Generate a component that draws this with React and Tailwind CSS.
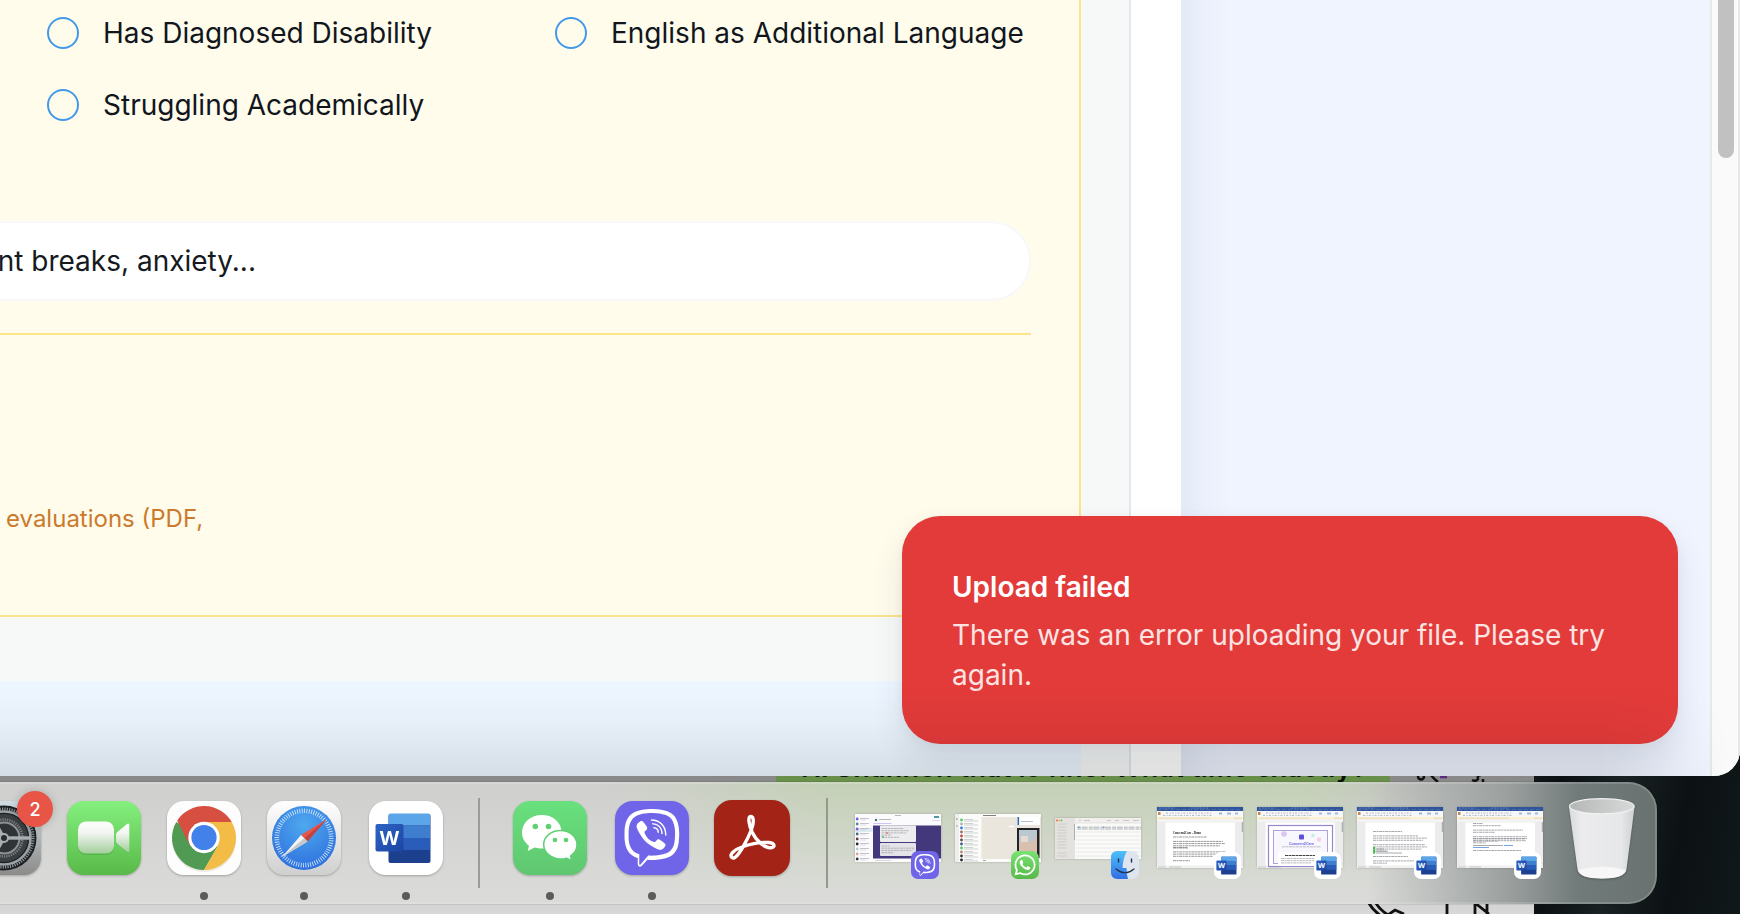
import React from "react";
import { FaViber, FaWhatsapp } from "react-icons/fa";

function Option({ label, className = "" }) {
  return (
    <label className={`flex h-8 items-center gap-6 ${className}`}>
      <span className="size-8 shrink-0 rounded-full border-2 border-[#4299ea]" />
      <span className="whitespace-nowrap text-[28px] leading-8 text-[#11161d]">{label}</span>
    </label>
  );
}

function WordMark({ id }) {
  return (
    <svg viewBox="0 0 74 74" className="size-full">
      <defs>
        <linearGradient id={id} x1="0" y1="0" x2="1" y2="1">
          <stop offset="0" stopColor="#2d63c4" />
          <stop offset="1" stopColor="#1b46a3" />
        </linearGradient>
      </defs>
      <rect x="19.5" y="13" width="42" height="49" rx="2" fill="#1c3f8e" />
      <path d="M19.500 24.500V14.500q0-2 2-2H59q2 0 2 2v10z" fill="#5ba5e8" />
      <path d="M19.500 24.500H61V37H19.500z" fill="#3f7dcf" />
      <path d="M19.500 37H61v12H19.500z" fill="#2a5cb9" />
      <rect x="6.500" y="23" width="28" height="27.500" rx="2" fill={`url(#${id})`} />
      <text x="20.300" y="44" textAnchor="middle" fontFamily="Open Sans, sans-serif" fontWeight="700" fontSize="20" fill="#fff">W</text>
    </svg>
  );
}

function SettingsIcon() {
  return (
    <svg viewBox="0 0 74 74" className="size-full">
      <defs>
        <linearGradient id="setBg" x1="0" y1="0" x2="0" y2="1">
          <stop offset="0" stopColor="#cfdde4" />
          <stop offset="1" stopColor="#8c8b89" />
        </linearGradient>
      </defs>
      <rect width="74" height="74" rx="17" fill="url(#setBg)" />
      <circle cx="37" cy="37" r="32.500" fill="#1c2022" />
      <circle cx="37" cy="37" r="29" fill="none" stroke="#8f979b" strokeWidth="3" strokeDasharray="1.2 1.2" />
      <circle cx="37" cy="37" r="26.500" fill="none" stroke="#9aa2a6" strokeWidth="2.500" />
      <circle cx="37" cy="37" r="24" fill="#3b3f41" />
      <circle cx="37" cy="37" r="18.500" fill="none" stroke="#777d80" strokeWidth="2.500" strokeDasharray="1.300 1" />
      <circle cx="37" cy="37" r="15.500" fill="none" stroke="#8b9194" strokeWidth="2" />
      <circle cx="37" cy="37" r="14" fill="#303335" />
      <g stroke="#a9b0b3" strokeWidth="3.400">
        <path d="M37 37H63" />
        <path d="M37 37L24 14.500" />
        <path d="M37 37L24 59.500" />
      </g>
      <circle cx="37" cy="37" r="4" fill="#2a2d2f" stroke="#a9b0b3" strokeWidth="2" />
    </svg>
  );
}

function FacetimeIcon() {
  return (
    <svg viewBox="0 0 74 74" className="size-full">
      <defs>
        <linearGradient id="ftBg" x1="0" y1="0" x2="0" y2="1">
          <stop offset="0" stopColor="#85f07f" />
          <stop offset="1" stopColor="#58b948" />
        </linearGradient>
        <linearGradient id="ftCam" x1="0" y1="0" x2="0" y2="1">
          <stop offset="0" stopColor="#ffffff" />
          <stop offset=".35" stopColor="#f2f5f1" />
          <stop offset="1" stopColor="#a3cf9c" />
        </linearGradient>
      </defs>
      <rect width="74" height="74" rx="17" fill="url(#ftBg)" />
      <rect x="11" y="22" width="36" height="32" rx="8" fill="#3f9a35" opacity=".4" />
      <rect x="11" y="20.500" width="36" height="32" rx="8" fill="url(#ftCam)" />
      <path d="M49 34q0-2 1.700-3.300L60 23q2.300-1.500 2.300 1v25.500q0 2.500-2.300 1L50.700 43Q49 41.700 49 40z" fill="url(#ftCam)" />
    </svg>
  );
}

function ChromeIcon() {
  return (
    <svg viewBox="0 0 74 74" className="size-full">
      <rect width="74" height="74" rx="17" fill="#fdfdfd" />
      <circle cx="37" cy="39" r="32" fill="#b9b09a" opacity=".25" />
      <path d="M37 37L9.290 21A32 32 0 0 0 37 69L50.860 45z" fill="#519a53" />
      <path d="M37 37L50.860 45L37 69A32 32 0 0 0 64.700 21H37z" fill="#f2bc47" />
      <path d="M37 37V21H64.700A32 32 0 0 0 10.200 19.500L23.140 45z" fill="#d64f41" />
      <circle cx="37" cy="36.500" r="15.700" fill="#fff" />
      <circle cx="37" cy="36.500" r="12.600" fill="#4280ea" />
    </svg>
  );
}

function SafariIcon() {
  return (
    <svg viewBox="0 0 74 74" className="size-full">
      <defs>
        <linearGradient id="sfBg" x1="0" y1="0" x2="0" y2="1">
          <stop offset="0" stopColor="#ffffff" />
          <stop offset="1" stopColor="#cfcfcf" />
        </linearGradient>
        <radialGradient id="sfDial" cx=".5" cy=".3" r=".7">
          <stop offset="0" stopColor="#4fa9ee" />
          <stop offset="1" stopColor="#2e70de" />
        </radialGradient>
      </defs>
      <rect width="74" height="74" rx="17" fill="url(#sfBg)" />
      <circle cx="37" cy="37" r="32" fill="url(#sfDial)" />
      <circle cx="37" cy="37" r="27.200" fill="none" stroke="#d9ecfb" strokeWidth="4.600" strokeDasharray=".8 1.573" />
      <path d="M59.500 18.500L34 34L40.500 40.500z" fill="#e8564a" />
      <path d="M59.500 18.500L37.200 37.200L40.500 40.500z" fill="#c2433d" />
      <path d="M15 56L34 34L40.500 40.500z" fill="#f4f4f4" />
      <path d="M15 56L37.200 37.200L40.500 40.500z" fill="#c6c9cc" />
    </svg>
  );
}

function WechatIcon() {
  return (
    <svg viewBox="0 0 74 74" className="size-full">
      <defs>
        <linearGradient id="wcBg" x1="0" y1="0" x2="0" y2="1">
          <stop offset="0" stopColor="#69e07d" />
          <stop offset="1" stopColor="#5fc770" />
        </linearGradient>
      </defs>
      <rect width="74" height="74" rx="17" fill="url(#wcBg)" />
      <path d="M29 14C17.500 14 9 21.800 9 31.500c0 5.500 2.700 10 7 13.200L14.700 50l7-3.500c2.300.7 4.700 1 7.300 1C40 47.500 48.500 40.500 48.500 31S40 14 29 14z" fill="#fff" />
      <circle cx="22.300" cy="25.500" r="2.800" fill="#62cf75" />
      <circle cx="35.500" cy="25.500" r="2.800" fill="#62cf75" />
      <path d="M47.500 29.500C38 29.500 30.700 35.700 30.700 43.500S38 58 47.500 58c2 0 4-.3 5.800-.9l5.500 2.600-1.300-4.700C61.500 52.300 64 48.200 64 43.500c0-7.800-7-14-16.500-14z" fill="#fff" stroke="#62cf75" strokeWidth="1.500" />
      <circle cx="42" cy="39" r="2.300" fill="#62cf75" />
      <circle cx="53" cy="39" r="2.300" fill="#62cf75" />
    </svg>
  );
}

function AcrobatIcon() {
  return (
    <svg viewBox="0 0 76 76" className="size-full">
      <rect width="76" height="76" rx="18" fill="#a32417" />
      <path
        d="M18 57.500C14.500 55 20.500 49.500 28 47C36 44 47 41.800 55 42.500C61 43 61.500 47.500 57 47.700C50 48 42 40.500 38 32C35 25 33.500 17 36.700 16.500C40 16.200 40 23 37.500 29.500C34 38.500 26 53.500 21.500 57C20 58.300 18.800 58.200 18 57.500z"
        fill="none" stroke="#fff" strokeWidth="3.400" strokeLinejoin="round"
      />
    </svg>
  );
}

function FinderIcon() {
  return (
    <svg viewBox="0 0 28 28" className="size-full">
      <defs>
        <linearGradient id="fdL" x1="0" y1="0" x2="0" y2="1">
          <stop offset="0" stopColor="#4fc0f8" />
          <stop offset="1" stopColor="#2f6fe6" />
        </linearGradient>
      </defs>
      <rect width="28" height="28" rx="6.500" fill="#dfe5ee" />
      <path d="M16 0H6.500Q0 0 0 6.500v15Q0 28 6.500 28H17q-1.500-5-1.500-11H11.500Q12 7 16 0z" fill="url(#fdL)" />
      <path d="M7.500 8v3M20.500 8v3" stroke="#20304a" strokeWidth="1.400" strokeLinecap="round" />
      <path d="M5 18q9 7.500 18 0" fill="none" stroke="#20304a" strokeWidth="1.200" strokeLinecap="round" />
    </svg>
  );
}

function TrashBin() {
  return (
    <svg viewBox="0 0 68 84" className="h-[84px] w-[68px]">
      <defs>
        <linearGradient id="binBody" x1="0" y1="0" x2="1" y2="0">
          <stop offset="0" stopColor="#d9dadb" />
          <stop offset=".2" stopColor="#ececee" />
          <stop offset=".8" stopColor="#e6e7e9" />
          <stop offset="1" stopColor="#cfd0d2" />
        </linearGradient>
        <linearGradient id="binIn" x1="0" y1="0" x2="1" y2="0">
          <stop offset="0" stopColor="#b5b6b6" />
          <stop offset="1" stopColor="#d8d9d9" />
        </linearGradient>
      </defs>
      <path d="M1 10L9.500 72Q11 81.500 34 81.500T58.500 72L66.500 10z" fill="url(#binBody)" />
      <path d="M9.800 73Q34 66 58.200 73Q56 81.500 34 81.500T9.800 73z" fill="#fafafa" opacity=".8" />
      <ellipse cx="33.800" cy="9.300" rx="32.400" ry="7.600" fill="url(#binIn)" stroke="#f1f1f1" strokeWidth="1.200" />
    </svg>
  );
}

function Lines({ x, y, rows, color = "#a4a6ab" }) {
  return rows.map((w, i) =>
    w ? <path key={i} d={`M${x} ${y + i * 2.2}h${w}`} stroke={color} strokeWidth=".8" strokeDasharray="3 .5 2 .6" /> : null
  );
}

function ViberThumb() {
  const dots = ["#6a5fe8", "#4a8a9a", "#7c5be0", "#3f6f7e", "#5a3a3a", "#22262c", "#b9c9d6", "#e0a58a", "#33363c"];
  return (
    <svg viewBox="0 0 86 48" className="h-12 w-[86px]">
      <rect width="86" height="48" fill="#fbfbfd" />
      <rect y="14" width="17.500" height="4" fill="#dceaf2" />
      {dots.map((c, i) => (
        <g key={i}>
          <circle cx="2.200" cy={5 + i * 5} r="1.400" fill={c} />
          <path d={`M5 ${4.500 + i * 5}h9`} stroke="#a9abb4" strokeWidth=".7" />
          <path d={`M5 ${6 + i * 5}h6`} stroke="#ccced6" strokeWidth=".6" />
        </g>
      ))}
      <path d="M40 1.500h6M24 5.500h12" stroke="#a5a6ae" strokeWidth=".8" />
      <circle cx="21" cy="6" r="1.200" fill="#3f6f7e" />
      <path d="M18.500 9.500h18" stroke="#b9aef0" strokeWidth=".7" />
      <rect x="79" y="2" width="5" height="2" fill="#4f9aa2" />
      <path d="M77 6.500h8" stroke="#d3ccf6" strokeWidth=".8" />
      <rect x="18" y="11.500" width="68" height="33" fill="#43387c" />
      <rect x="25" y="11.500" width="36" height="16.500" rx="1" fill="#ededf0" />
      <rect x="25" y="29" width="36" height="13" rx="1" fill="#e4e4e8" />
      <Lines x={26.500} y={14.500} rows={[22, 27, 25, 10, 18]} />
      <Lines x={26.500} y={32} rows={[8, 33, 31, 12]} />
      <circle cx="28" cy="23" r="1" fill="#58c46a" />
      <circle cx="32" cy="19" r=".9" fill="#e46a6a" />
      <path d="M20 46.500h16" stroke="#c9cad2" strokeWidth=".7" />
    </svg>
  );
}

function WhatsappThumb() {
  const dots = ["#56c96a", "#b0b3b8", "#3478e0", "#9a6a5c", "#c0483f", "#5b4a42", "#3a5a8a", "#56c96a", "#b08a6e", "#40312c", "#26262a"];
  return (
    <svg viewBox="0 0 86 48" className="h-12 w-[86px]">
      <rect width="86" height="48" fill="#fbfbfa" />
      <rect width="4" height="48" fill="#eeeeec" />
      {dots.map((c, i) => (
        <g key={i}>
          <circle cx="6.500" cy={6 + i * 4} r="1.400" fill={c} />
          <path d={`M9 ${5.500 + i * 4}h9M9 ${7 + i * 4}h14`} stroke="#b4b6b9" strokeWidth=".6" />
        </g>
      ))}
      <circle cx="1.800" cy="5" r=".8" fill="#7f8286" />
      <circle cx="1.800" cy="12" r=".8" fill="#9a9da0" />
      <rect x="26.500" y="3" width="59.500" height="42" fill="#ebe6dd" />
      <path d="M28 1.500h13" stroke="#6f7276" strokeWidth=".9" />
      <path d="M54 12.500h5" stroke="#fff" strokeWidth="1.500" />
      <rect x="62" y="3" width="23" height="8" fill="#fff" />
      <rect x="62.500" y="3" width="1.600" height="8" fill="#2f6aa8" />
      <path d="M66 7.500h12" stroke="#9fb4c8" strokeWidth=".8" />
      <rect x="62" y="14" width="22.500" height="30" fill="#222124" />
      <rect x="64" y="16" width="18" height="28" fill="#b9c9cf" />
      <path d="M64 30q5-8 9-3t9-7v18H64z" fill="#d9bfae" />
      <path d="M66 22h7v6h-7z" fill="#e7d9cf" />
      <path d="M28 46.500h3" stroke="#8f9295" strokeWidth=".8" />
    </svg>
  );
}

function FinderThumb() {
  return (
    <svg viewBox="0 0 86 41" className="h-[41px] w-[86px]">
      <rect width="86" height="41" fill="#fafaf9" />
      <rect width="20" height="41" fill="#e4e2de" />
      <rect x="20" width="66" height="5" fill="#f0efed" />
      <circle cx="2" cy="2.500" r=".9" fill="#ea5b50" />
      <circle cx="4.300" cy="2.500" r=".9" fill="#f0b23d" />
      <circle cx="6.500" cy="2.500" r=".9" fill="#56bf4b" />
      <path d="M24 2.500h2M29 2.500h6M52 2.500h4M60 2.500h4M68 2.500h6M78 2.500h6" stroke="#bdbdbb" strokeWidth=".8" />
      <path d="M20 5h66" stroke="#d6d6d4" strokeWidth=".6" />
      <path d="M22 9.200h64M22 11h64" stroke="#9a9da3" strokeWidth=".8" strokeDasharray="4 .7 6 1" />
      <path d="M23 9.200h1.500M48 9.200h1.500" stroke="#3e8ae6" strokeWidth="1" />
      {[14, 18, 22, 26, 30, 34, 38].map((y) => (
        <path key={y} d={`M20.500 ${y}h65`} stroke="#f1f1ef" strokeWidth="1.800" />
      ))}
      {[6, 9, 12, 15, 18, 21, 24, 27, 30, 35, 38].map((y) => (
        <path key={y} d={`M2.500 ${y}h9`} stroke="#c8c7c5" strokeWidth=".8" />
      ))}
      <path d="M19.500 6v16" stroke="#a8a7a5" strokeWidth=".9" />
    </svg>
  );
}

function DocThumb({ kind }) {
  return (
    <svg viewBox="0 0 86 61" className="h-[61px] w-[86px]">
      <rect width="86" height="61" fill="#ececed" />
      <rect width="86" height="4" fill="#2f549b" />
      <path d="M1 2.600h82" stroke="#5f80bf" strokeWidth=".6" strokeDasharray="4 2" />
      <path d="M2 1h16M34 1h18" stroke="#8ba3d2" strokeWidth=".6" strokeDasharray="2 1" />
      <rect y="4" width="86" height="6" fill="#f7f7f8" />
      <path d="M9 6h46M6 8.400h50" stroke="#a3adc0" strokeWidth=".9" strokeDasharray="2 1.600 1 1.200" />
      <rect x="1" y="5" width="2.500" height="3" fill="#c98a5a" />
      <path d="M62 6.500h3M70 6.500h4M78 6.500h3" stroke="#9fbbe6" strokeWidth="1.800" />
      <rect y="10" width="86" height="2.500" fill="#fcf1d3" />
      <path d="M2 11.200h50M77 11.200h8" stroke="#d8cba6" strokeWidth=".6" />
      <rect y="12.500" width="86" height="2.500" fill="#f3f3f3" />
      <rect x="8.500" y="15.500" width="69.500" height="43" fill="#fff" />
      <path d="M85.300 15v10" stroke="#9fa0a3" strokeWidth="1" />
      <rect y="59" width="86" height="2" fill="#f1f1f1" />
      <path d="M1 60h8M12 60h12" stroke="#a7a8ab" strokeWidth=".6" />
      {kind === "demo" && (
        <>
          <text x="16" y="26.500" textLength="28" lengthAdjust="spacingAndGlyphs" fontFamily="Liberation Serif, serif" fontWeight="700" fontSize="4" fill="#111">Concern2Care - Demo</text>
          <Lines x={16} y={30} rows={[34, 0, 50, 52, 47, 15]} color="#7d7e82" />
          <Lines x={16} y={40.500} rows={[14, 0, 53, 50, 40, 0, 17, 0]} color="#7d7e82" />
        </>
      )}
      {kind === "cert" && (
        <>
          <rect x="11.500" y="18.500" width="64" height="41" fill="#fff" stroke="#9a86c9" strokeWidth="1.200" />
          <rect x="16.500" y="23.500" width="54" height="33" fill="#f7f7fd" stroke="#a896d6" strokeWidth=".9" />
          <circle cx="27" cy="27" r="2.800" fill="#d9c8f3" />
          <circle cx="56" cy="28.500" r="1.800" fill="#c5eedf" />
          <circle cx="62" cy="32.500" r="2.200" fill="#f6d0e8" />
          <rect x="42" y="27.500" width="5" height="5" rx="1" fill="#5b50dd" />
          <text x="44.500" y="37.500" textAnchor="middle" fontFamily="Liberation Sans, sans-serif" fontWeight="700" fontSize="3.700" fill="#6a63e4">Concern2Care</text>
          <path d="M25 39.800h39" stroke="#a5a7b5" strokeWidth=".7" strokeDasharray="3 .5" />
          <rect x="21" y="45" width="47" height="14" fill="#fff" />
          <path d="M28 48.500h30" stroke="#444" strokeWidth="1" strokeDasharray="3 .5" />
          <Lines x={24} y={51.500} rows={[38, 33, 30]} />
        </>
      )}
      {kind === "notes" && (
        <>
          <Lines x={16} y={24.500} rows={[29, 0, 45, 54, 50, 0, 52, 54, 49, 15]} color="#909297" />
          <path d="M16 41h2M16 43.300h2M16 45.600h2" stroke="#46c24c" strokeWidth="2.200" />
          <path d="M19 42h8M19 44h10M19 46h26" stroke="#909297" strokeWidth=".8" />
          <Lines x={16} y={49.500} rows={[35, 0, 48, 14]} color="#909297" />
        </>
      )}
      {kind === "letter" && (
        <>
          <Lines x={16} y={16.500} rows={[10, 28, 0, 50, 22, 0, 54, 52, 25]} color="#909297" />
          <Lines x={16} y={31.500} rows={[54, 53, 13]} color="#909297" />
          <path d="M16 38.500h30" stroke="#909297" strokeWidth=".8" />
          <path d="M47 38.500h9M16 40.500h16" stroke="#4d8fd6" strokeWidth=".8" />
          <Lines x={16} y={43.500} rows={[48]} color="#909297" />
        </>
      )}
    </svg>
  );
}

function DockApp({ children, running, className = "" }) {
  return (
    <div className={`flex shrink-0 flex-col items-center ${className}`}>
      <div className="size-[74px] drop-shadow-[0_1px_1px_rgba(0,0,0,0.25)]">{children}</div>
      {running && <span className="mt-[17px] size-2 rounded-full bg-[#5b5b5a]" />}
    </div>
  );
}

function DockWindow({ children, badge, className = "" }) {
  return (
    <div className={`relative shrink-0 ${className}`}>
      <div className="drop-shadow-[0_0_1px_rgba(0,0,0,0.2)]">{children}</div>
      {badge}
    </div>
  );
}

function ViberBadge({ className }) {
  return (
    <span className={`flex items-center justify-center bg-[#7065e9] text-white ${className}`}>
      <FaViber className="size-[78%]" />
    </span>
  );
}

function WordBadge({ id }) {
  return (
    <span className="absolute left-[57px] top-[45px] size-[27px] rounded-[7px] bg-white">
      <WordMark id={id} />
    </span>
  );
}

function Dock() {
  return (
    <div className="relative mt-[6px] flex h-[122px] w-[1689px] -ml-8 rounded-r-[28px] border-2 border-[#ffffff28] bg-[linear-gradient(to_right,transparent_1400px,#9ba09f_1540px,#717b7a_1610px,#69726f_1689px),linear-gradient(to_bottom,transparent,#dadbd8_90%),linear-gradient(to_right,#cfcfcd_640px,#c4d0b6_860px,#c4d0b6_1340px,#c4c6c2_1440px)] bg-origin-border pt-[17px] shadow-[0_0_1px_rgba(0,0,0,0.7)]">
      <div className="relative -ml-[3px] shrink-0">
        <DockApp><SettingsIcon /></DockApp>
        <span className="absolute left-[50px] -top-[10px] flex size-9 items-center justify-center rounded-full bg-[#e85445] text-[18px] font-medium text-white shadow-[0_0_8px_rgba(0,0,0,0.2)]">2</span>
      </div>
      <DockApp className="ml-[26px]"><FacetimeIcon /></DockApp>
      <DockApp running className="ml-[26px]"><ChromeIcon /></DockApp>
      <DockApp running className="ml-[26px]"><SafariIcon /></DockApp>
      <DockApp running className="ml-[28px]">
        <div className="size-full rounded-[17px] bg-white"><WordMark id="wordDock" /></div>
      </DockApp>
      <span className="-mt-[3px] ml-[35px] h-[90px] w-[2px] shrink-0 bg-[#9b9c9a]" />
      <DockApp running className="ml-[33px]"><WechatIcon /></DockApp>
      <DockApp running className="ml-[28px]">
        <ViberBadge className="size-full rounded-[18px]" />
      </DockApp>
      <DockApp className="ml-[25px]">
        <div className="-mt-px size-[76px]"><AcrobatIcon /></div>
      </DockApp>
      <span className="-mt-[3px] ml-[38px] h-[90px] w-[2px] shrink-0 bg-[#929a89]" />
      <DockWindow className="ml-[27px] mt-[13px]" badge={<ViberBadge className="absolute left-[56px] top-[37px] size-7 rounded-[7px]" />}>
        <ViberThumb />
      </DockWindow>
      <DockWindow
        className="ml-[14px] mt-[13px]"
        badge={
          <span className="absolute left-[56px] top-[37px] flex size-7 items-center justify-center rounded-[7px] bg-linear-to-b from-[#7be274] to-[#56b948] text-white">
            <FaWhatsapp className="size-6" />
          </span>
        }
      >
        <WhatsappThumb />
      </DockWindow>
      <DockWindow className="ml-[14px] mt-[17px]" badge={<span className="absolute left-[56px] top-[33px] size-7"><FinderIcon /></span>}>
        <FinderThumb />
      </DockWindow>
      <DockWindow className="ml-[16px] mt-[6px]" badge={<WordBadge id="w1" />}><DocThumb kind="demo" /></DockWindow>
      <DockWindow className="ml-[14px] mt-[6px]" badge={<WordBadge id="w2" />}><DocThumb kind="cert" /></DockWindow>
      <DockWindow className="ml-[14px] mt-[6px]" badge={<WordBadge id="w3" />}><DocThumb kind="notes" /></DockWindow>
      <DockWindow className="ml-[14px] mt-[6px]" badge={<WordBadge id="w4" />}><DocThumb kind="letter" /></DockWindow>
      <div className="-mt-[4px] ml-[25px] shrink-0 drop-shadow-[0_1px_1px_rgba(0,0,0,0.25)]"><TrashBin /></div>
    </div>
  );
}

function Desktop() {
  return (
    <div className="absolute inset-0 flex bg-[#0d1314]">
      <div className="relative flex w-[1534px] flex-col justify-between pt-[740px]">
        <div className="flex h-[46px] bg-[#898989]">
          <div className="ml-[776px] h-[46px] w-[614px] overflow-hidden bg-[#68904a] pl-[25px] pt-[10px]">
            <span className="inline-block whitespace-nowrap text-[27px] font-semibold leading-[36px] tracking-[0.2px] text-[#0b0f08]">
              Hi Shannon that is fine. What time exactly?
            </span>
          </div>
          <svg viewBox="0 0 144 42" className="h-[42px] w-[144px]" fill="none" stroke="#111" strokeWidth="2.500">
            <circle cx="31" cy="36.500" r="3" />
            <path d="M40 34q4 5 8 8M82 40q4 2 6-1q-1-4 3-4" />
            <path d="M50 37h7" stroke="#5b2b80" />
            <path d="M93 39v3" />
          </svg>
        </div>
        <div className="flex h-[20px] justify-end bg-linear-to-b from-[#cfcfcf] to-[#d8d8d8]">
          <svg viewBox="0 0 180 20" className="h-5 w-[180px]" fill="none" stroke="#111" strokeWidth="2.800">
            <path d="M14 8Q20 18 30 24M21 8Q26 16 34 21L41 16L50 20" />
            <path d="M93 8V20M121 20V9L135 20M133 8V20" />
          </svg>
        </div>
      </div>
      <div className="flex-1 bg-[linear-gradient(100deg,#0a0f10_10%,#161d1f_30%,#0b1112_45%,#1a2122_62%,#0c1213_80%,#111819)]" />
    </div>
  );
}

export default function App() {
  return (
    <div className="relative h-[914px] w-[1740px] overflow-hidden font-[Inter,sans-serif]">
      <Desktop />
      <div className="relative flex h-[776px] w-[1740px] overflow-hidden rounded-br-[26px] bg-[#eff4ff]">
        <main className="flex w-[1081px] flex-col">
          <section className="h-[617px] border-b-2 border-r-2 border-[#fbe48c] bg-[#fffcec] pt-[17px]">
            <div className="grid w-[1079px] grid-cols-[508px_1fr] gap-y-10 pl-[47px]">
              <Option label="Has Diagnosed Disability" />
              <Option label="English as Additional Language" />
              <Option label="Struggling Academically" />
            </div>
            <div className="mt-[100px] flex h-20 w-[1031px] items-center rounded-r-[40px] border-y-2 border-r-2 border-[#f8f8fb] bg-white">
              <span className="flex w-[256px] justify-end whitespace-nowrap text-[28px] text-[#151a20]">nt breaks, anxiety...</span>
            </div>
            <div className="mt-8 h-[2px] w-[1031px] bg-[#fbe48c]" />
            <p className="mt-[168px] pl-[6px] text-[24px] leading-8 text-[#cb7a2c]">evaluations (PDF,</p>
          </section>
          <div className="h-16 bg-[#f7f9f8]" />
          <div className="flex-1 bg-[#edf6ff]" />
        </main>
        <div className="w-[50px] border-r-2 border-[#e2e8f0] bg-[#f7f9f8]" />
        <div className="w-[50px] bg-white" />
        <aside className="flex-1 bg-[linear-gradient(to_right,#e4e9f6,#ebf0fc_22px,#eff4ff_50px)]" />
        <div className="flex w-[30px] justify-center border-x-2 border-[#e8e8e8] bg-[#fafafa] pl-[2px]">
          <div className="h-[158px] w-4 rounded-b-full bg-[#c1c1c1]" />
        </div>
        <div
          role="alert"
          className="absolute left-[902px] top-[516px] h-[228px] w-[776px] rounded-[38px] bg-[#e23b3a] px-[50px] pt-[51px] shadow-[0_16px_32px_rgba(30,40,60,0.1),0_2px_12px_rgba(30,40,60,0.04)]"
        >
          <p className="text-[28px] font-semibold leading-10 text-white">Upload failed</p>
          <p className="mt-2 text-[28px] leading-10 text-[#fde4e3]">There was an error uploading your file. Please try again.</p>
        </div>
        <div className="pointer-events-none absolute bottom-0 left-0 h-[90px] w-[1740px] bg-[linear-gradient(to_bottom,transparent,#00000006_40%,#0000001a)] [mask-image:linear-gradient(to_right,black_1600px,transparent_1730px)]" />
      </div>
      <Dock />
    </div>
  );
}
